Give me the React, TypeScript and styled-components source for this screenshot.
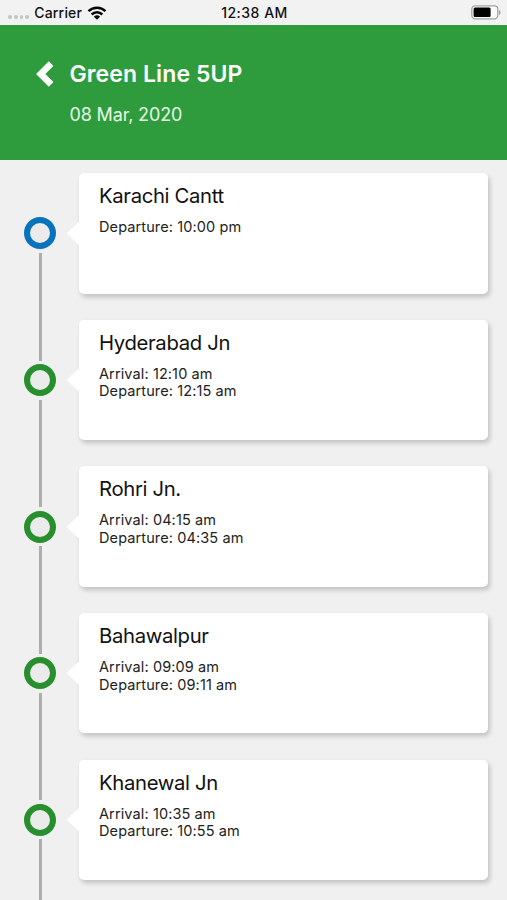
import React from "react";
import styled, { createGlobalStyle } from "styled-components";

const GlobalStyle = createGlobalStyle`
  * { box-sizing: border-box; }
  body {
    margin: 0;
    background: #f0f0f0;
    font-family: Inter, "Liberation Sans", sans-serif;
    overflow: hidden;
  }
`;

const Screen = styled.div`
  height: 900px;
  overflow: hidden;
  display: flex;
  flex-direction: column;
  background: #f0f0f0;
`;

const StatusBar = styled.div`
  flex: none;
  height: 25.3px;
  display: grid;
  grid-template-columns: 1fr auto 1fr;
  align-items: center;
  padding: 0 6px 0 8px;
  background: #f2f2f2;
  color: #111;
  font-size: 14px;
  font-weight: 500;
  line-height: 20px;
`;

const Network = styled.div`
  display: flex;
  align-items: center;
`;

const Dots = styled.div`
  display: flex;
  gap: 2px;
  margin: 9px 5px 0 0;
`;

const Dot = styled.span`
  width: 3.8px;
  height: 3.8px;
  border-radius: 50%;
  background: #c4c4c4;
`;

const Carrier = styled.span`
  letter-spacing: 0.2px;
  margin-right: 5px;
`;

const Clock = styled.span`
  letter-spacing: 0.5px;
`;

const Power = styled.div`
  display: flex;
  justify-content: flex-end;
`;

const Header = styled.header`
  flex: none;
  height: 134.9px;
  padding: 33px 36px 0;
  background: #2e9c3c;
  color: #fff;
`;

const TitleRow = styled.div`
  display: flex;
  align-items: center;
  height: 32px;
`;

const BackButton = styled.button`
  display: flex;
  width: 33.5px;
  padding: 0;
  border: 0;
  background: none;
  color: inherit;
`;

const Title = styled.h1`
  margin: 0;
  font-size: 23px;
  font-weight: 600;
  line-height: 32px;
  letter-spacing: 0.1px;
  white-space: nowrap;
`;

const TravelDate = styled.div`
  margin: 12.7px 0 0 33.5px;
  font-size: 18px;
  line-height: 24px;
  letter-spacing: -0.15px;
  color: #e6f8e6;
`;

const Timeline = styled.ol`
  flex: 1;
  min-height: 0;
  margin: 0;
  padding: 0;
  list-style: none;
`;

const Stop = styled.li`
  display: flex;
  align-items: center;
  height: 146.6px;
`;

const Continuation = styled.li`
  display: flex;
  justify-content: center;
  width: 80px;
  height: 40px;
`;

const Rail = styled.div`
  flex: none;
  display: flex;
  flex-direction: column;
  align-items: center;
  gap: 3.5px;
  width: 80px;
  height: 100%;
`;

const Line = styled.span<{ $hidden?: boolean }>`
  flex: 1;
  width: 3px;
  background: ${(p) => (p.$hidden ? "transparent" : "#adadad")};
`;

const TrailingLine = styled.span`
  width: 3px;
  background: #adadad;
`;

const Ring = styled.span<{ $color: string }>`
  flex: none;
  width: 32px;
  height: 32px;
  border: 6px solid ${(p) => p.$color};
  border-radius: 50%;
  background: #ebebeb;
`;

const Pointer = styled.span`
  flex: none;
  width: 13px;
  height: 24px;
  margin-left: -13.5px;
  background: #fff;
  clip-path: polygon(100% 0, 100% 100%, 0 50%);
`;

const Card = styled.article`
  flex: none;
  width: 408.5px;
  height: 120.4px;
  margin-left: -0.5px;
  padding: 9px 20px;
  border-radius: 5px;
  background: #fff;
  box-shadow: 2px 3px 5px rgba(0, 0, 0, 0.2);
`;

const Station = styled.h2`
  margin: 0 0 9px;
  font-size: 20.3px;
  font-weight: 400;
  line-height: 27px;
  letter-spacing: -0.34px;
  color: #111;
`;

const Time = styled.p`
  margin: 0;
  font-size: 14.5px;
  line-height: 17.6px;
  letter-spacing: 0.11px;
  color: #222;
`;

interface StopData {
  station: string;
  arrival?: string;
  departure: string;
}

const stops: StopData[] = [
  { station: "Karachi Cantt", departure: "10:00 pm" },
  { station: "Hyderabad Jn", arrival: "12:10 am", departure: "12:15 am" },
  { station: "Rohri Jn.", arrival: "04:15 am", departure: "04:35 am" },
  { station: "Bahawalpur", arrival: "09:09 am", departure: "09:11 am" },
  { station: "Khanewal Jn", arrival: "10:35 am", departure: "10:55 am" },
];

const WifiIcon = () => (
  <svg width="20" height="14" viewBox="0 0 20 14" fill="none" stroke="#050505" strokeWidth="2.5">
    <path d="M1.5 5.2a12.2 12.2 0 0 1 17 0" />
    <path d="M4.7 8.5a7.6 7.6 0 0 1 10.6 0" />
    <path d="M10 13.7 6.9 10.7a4.5 4.5 0 0 1 6.2 0Z" fill="#050505" stroke="none" />
  </svg>
);

const BatteryIcon = () => (
  <svg width="30" height="15" viewBox="0 0 30 15">
    <rect x="0.8" y="0.8" width="26" height="13" rx="3.5" fill="#fafafa" stroke="#a2a2a2" strokeWidth="1.3" />
    <rect x="2.6" y="2.6" width="17" height="9.4" rx="1.5" fill="#000" />
    <path d="M28 5v5c2-.8 2-4.2 0-5Z" fill="#a2a2a2" />
  </svg>
);

const BackIcon = () => (
  <svg width="18" height="26" viewBox="0 0 18 26" fill="none" stroke="#fff" strokeWidth="6.6">
    <path d="M15.1 2.7 4.8 13l10.3 10.3" />
  </svg>
);

export default function App() {
  return (
    <>
      <GlobalStyle />
      <Screen>
        <StatusBar>
          <Network>
            <Dots>
              <Dot />
              <Dot />
              <Dot />
              <Dot />
            </Dots>
            <Carrier>Carrier</Carrier>
            <WifiIcon />
          </Network>
          <Clock>12:38 AM</Clock>
          <Power>
            <BatteryIcon />
          </Power>
        </StatusBar>
        <Header>
          <TitleRow>
            <BackButton aria-label="Back">
              <BackIcon />
            </BackButton>
            <Title>Green Line 5UP</Title>
          </TitleRow>
          <TravelDate>08 Mar, 2020</TravelDate>
        </Header>
        <Timeline>
          {stops.map((stop, i) => (
            <Stop key={stop.station}>
              <Rail>
                <Line $hidden={i === 0} />
                <Ring $color={i === 0 ? "#0873bd" : "#278f2d"} />
                <Line />
              </Rail>
              <Pointer />
              <Card>
                <Station>{stop.station}</Station>
                {stop.arrival && <Time>Arrival: {stop.arrival}</Time>}
                <Time>Departure: {stop.departure}</Time>
              </Card>
            </Stop>
          ))}
          <Continuation>
            <TrailingLine />
          </Continuation>
        </Timeline>
      </Screen>
    </>
  );
}
